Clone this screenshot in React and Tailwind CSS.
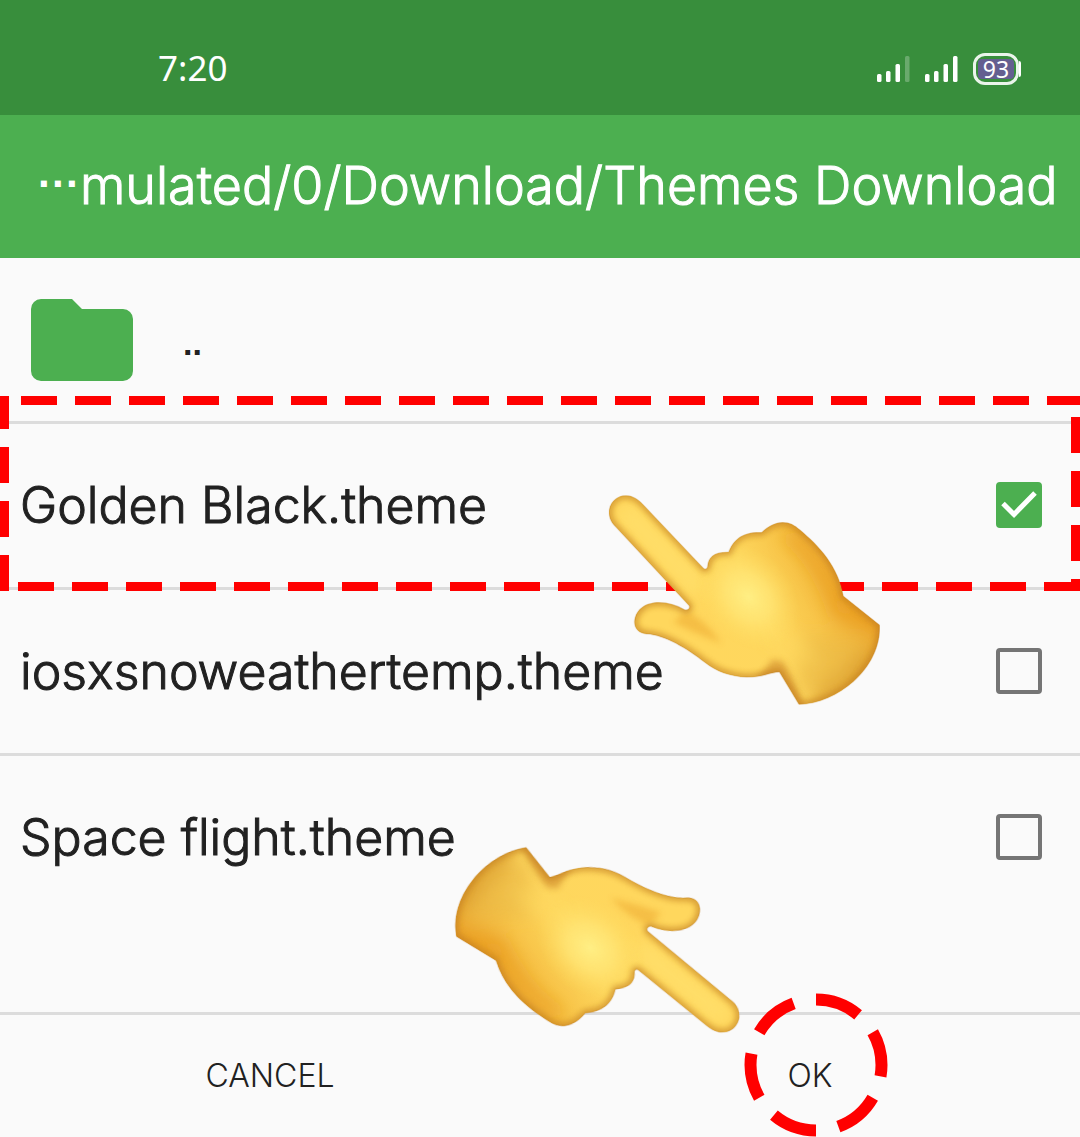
import { useId, useState } from "react";

const files = ["Golden Black.theme", "iosxsnoweathertemp.theme", "Space flight.theme"];

const HAND_PATH =
  "M57 100C55 70 80 46 108 46C128 47 145 58 158 72L340 264C344 269 350 268 352 262C354 232 370 215 416 216C430 180 455 155 515 157C535 138 555 128 578 127C600 127 615 137 628 148C690 200 745 260 760 348L869 435C872 500 840 560 790 605C745 645 685 672 627 674L568 576C540 577 520 592 470 592C420 590 380 575 345 548C290 505 225 465 170 462C148 460 133 448 133 425C137 385 170 367 207 367C235 368 260 375 282 388C290 393 302 386 297 377L78 142C66 130 58 118 57 100Z";

function SignalIcon({ weak }) {
  return (
    <svg className="h-7 w-9" viewBox="0 0 36 28" fill="#fff" aria-hidden="true">
      <rect x="0" y="19" width="4.5" height="8" rx="1.5" />
      <rect x="9" y="16" width="4.5" height="11" rx="1.5" />
      <rect x="18.5" y="9" width="4.5" height="18" rx="1.5" />
      <rect x="28" y="1" width="4.5" height="26" rx="1.5" opacity={weak ? 0.25 : 1} />
    </svg>
  );
}

function Battery({ level }) {
  return (
    <div className="flex items-center">
      <div className="grid h-8 w-[46px] place-items-center rounded-xl border-3 border-[#eaf5eb]">
        <span className="grid h-5 w-9 place-items-center rounded-sm bg-[#645f90] font-['Noto_Sans',sans-serif] text-[23px] leading-[20px] font-normal text-white">{level}</span>
      </div>
      <span className="h-4 w-[2px] rounded-r-sm bg-white" />
    </div>
  );
}

function PointingHand({ className }) {
  const id = useId();
  return (
    <svg className={className} viewBox="0 0 930 720" aria-hidden="true">
      <defs>
        <linearGradient id={`${id}base`} gradientUnits="userSpaceOnUse" x1="330" y1="470" x2="790" y2="250">
          <stop offset="0" stopColor="#ffd75d" />
          <stop offset="0.4" stopColor="#fed75e" />
          <stop offset="0.65" stopColor="#f8c64a" />
          <stop offset="1" stopColor="#eaa229" />
        </linearGradient>
        <radialGradient id={`${id}glow`}>
          <stop offset="0" stopColor="#ffee84" />
          <stop offset="0.45" stopColor="#ffe676" stopOpacity="0.75" />
          <stop offset="1" stopColor="#ffdc60" stopOpacity="0" />
        </radialGradient>
        <clipPath id={`${id}clip`}>
          <path d={HAND_PATH} />
        </clipPath>
        <filter id={`${id}soft`} x="-30%" y="-30%" width="160%" height="160%">
          <feGaussianBlur stdDeviation="9" />
        </filter>
        <filter id={`${id}wide`} x="-60%" y="-60%" width="220%" height="220%">
          <feGaussianBlur stdDeviation="26" />
        </filter>
      </defs>
      <g clipPath={`url(#${id}clip)`}>
        <path d={HAND_PATH} fill={`url(#${id}base)`} />
        <g filter={`url(#${id}wide)`}>
          <path d="M600 150C680 210 730 290 760 350L880 435L850 450L730 410C700 310 650 220 580 180Z" fill="#e8981a" opacity="0.7" />
          <path d="M700 600L860 490L860 620L640 720Z" fill="#d79a30" opacity="0.7" />
          <path d="M640 470L840 480L740 620L620 640Z" fill="#e9b843" opacity="0.6" />
          <path d="M100 90L330 330" stroke="#ffe06c" strokeWidth="50" />
          <path d="M560 430L690 540L650 540L540 470Z" fill="#ffdb61" opacity="0.8" />
        </g>
        <path d="M500 600L548 538L580 545L600 580L650 690L600 700Z" fill="#c87d20" opacity="0.5" filter={`url(#${id}soft)`} />
        <path d="M290 395C330 410 365 450 395 490C345 470 290 450 250 425Z" fill="#efae36" opacity="0.6" filter={`url(#${id}soft)`} />
        <ellipse cx="475" cy="350" rx="180" ry="135" transform="rotate(48 475 350)" fill={`url(#${id}glow)`} />
        <path d={HAND_PATH} fill="none" stroke="#bf791c" strokeWidth="17" opacity="0.75" filter={`url(#${id}soft)`} />
        <path d={HAND_PATH} fill="none" stroke="#a96818" strokeWidth="3" opacity="0.55" />
      </g>
    </svg>
  );
}

function RowHighlight() {
  return (
    <svg className="pointer-events-none absolute inset-x-0 -top-7 z-10 h-[195px] w-full" stroke="#f00" strokeWidth="9" strokeDasharray="36 18" aria-hidden="true">
      <line x1="0" y1="4.5" x2="100%" y2="4.5" strokeDashoffset="33" />
      <line x1="0" y1="190.5" x2="100%" y2="190.5" strokeDashoffset="36" />
      <line x1="4.5" y1="0" x2="4.5" y2="195" strokeDashoffset="3" />
      <svg x="100%" overflow="visible">
        <line x1="-4.5" y1="0" x2="-4.5" y2="195" strokeDashoffset="33" />
      </svg>
    </svg>
  );
}

function FileRow({ name, checked, onToggle, highlighted }) {
  return (
    <li className="relative border-t-3 border-[#dcdcdc]">
      <label className="flex h-[163px] items-center justify-between pr-[38px] pb-px pl-5">
        <span className="text-[50px] leading-none [-webkit-text-stroke:1px]">{name}</span>
        <span className="relative h-[46px] w-[46px]">
          <input
            type="checkbox"
            checked={checked}
            onChange={onToggle}
            className="h-full w-full appearance-none rounded-[4px] border-4 border-[#757575] checked:border-[#4caf50] checked:bg-[#4caf50]"
          />
          {checked && (
            <svg className="pointer-events-none absolute inset-0 h-full w-full" viewBox="0 0 46 46" aria-hidden="true">
              <path d="M7 21.5L18 32.5L39 11" fill="none" stroke="#fff" strokeWidth="5" />
            </svg>
          )}
        </span>
      </label>
      {highlighted && <RowHighlight />}
    </li>
  );
}

export default function App() {
  const [selected, setSelected] = useState(["Golden Black.theme"]);

  function toggle(name) {
    setSelected((current) => (current.includes(name) ? current.filter((item) => item !== name) : [...current, name]));
  }

  return (
    <div className="relative flex min-h-screen flex-col overflow-hidden bg-[#fafafa] font-['Inter',sans-serif] font-light text-[#212121]">
      <div className="flex h-[115px] items-center justify-between bg-[#388e3c] pt-[22px] pr-[59px] pl-[158px] text-white">
        <span className="pb-[2px] font-['Noto_Sans',sans-serif] text-[35px] leading-none font-normal">7:20</span>
        <div className="flex items-center gap-3">
          <SignalIcon weak />
          <SignalIcon />
          <Battery level={93} />
        </div>
      </div>

      <header className="flex h-[143px] items-center bg-[#4caf50] pb-[2px] pl-[38px] text-white">
        <h1 className="flex items-center text-[52px] leading-none whitespace-nowrap">
          <span className="pb-1 font-['Liberation_Sans',sans-serif] text-[42px] leading-none font-bold">···</span>
          <span className="[-webkit-text-stroke:1px]">mulated/0/Download/Themes Download</span>
        </h1>
      </header>

      <main className="flex flex-1 flex-col">
        <button type="button" className="flex h-[163px] items-center gap-[50px] pl-[31px] text-left" aria-label="Parent folder">
          <svg className="h-[82px] w-[102px]" viewBox="0 0 102 82" fill="#4caf50" aria-hidden="true">
            <path d="M10 0H41L51 10H92A10 10 0 0 1 102 20V72A10 10 0 0 1 92 82H10A10 10 0 0 1 0 72V10A10 10 0 0 1 10 0Z" />
          </svg>
          <span className="pt-2 font-['Liberation_Sans',sans-serif] text-[34px] font-bold">..</span>
        </button>
        <ul>
          {files.map((name, index) => (
            <FileRow key={name} name={name} checked={selected.includes(name)} onToggle={() => toggle(name)} highlighted={index === 0} />
          ))}
        </ul>
      </main>

      <footer className="grid h-[125px] grid-cols-2 border-t-3 border-[#dcdcdc] text-[32px]">
        <button type="button">CANCEL</button>
        <button type="button" className="relative">
          OK
          <svg className="pointer-events-none absolute -top-[22px] left-1/2 -ml-[66px] h-36 w-36" viewBox="0 0 144 144" aria-hidden="true">
            <circle cx="72" cy="72" r="65.5" fill="none" stroke="#f00" strokeWidth="12" pathLength="360" strokeDasharray="40 20" transform="rotate(-90 72 72)" />
          </svg>
        </button>
      </footer>

      <PointingHand className="pointer-events-none absolute top-[480px] left-[590px] z-20 w-[310px]" />
      <PointingHand className="pointer-events-none absolute top-[824px] left-[438px] z-20 w-[310px] rotate-[172.6deg]" />
    </div>
  );
}
